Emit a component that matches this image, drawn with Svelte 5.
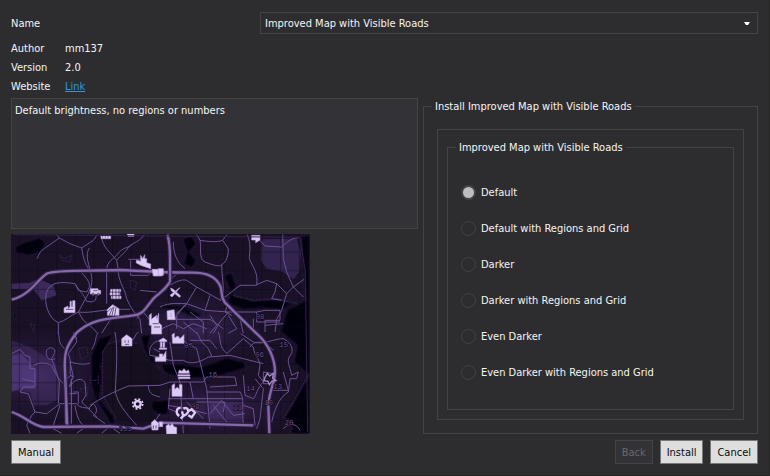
<script>
  const mods = ['Improved Map with Visible Roads'];
  const details = [
    { label: 'Author', value: 'mm137' },
    { label: 'Version', value: '2.0' },
    { label: 'Website', value: 'Link', href: '#website' }
  ];
  const options = [
    'Default',
    'Default with Regions and Grid',
    'Darker',
    'Darker with Regions and Grid',
    'Even Darker',
    'Even Darker with Regions and Grid'
  ];
  let mod = $state(mods[0]);
  let choice = $state(options[0]);

  const highways = [
    'M5 203C60 190 85 140 110 125C140 112 230 118 330 114C380 116 450 122 550 122C600 122 622 140 632 165C637 185 632 195 645 212L740 305C775 335 795 380 795 420C795 450 777 480 775 520L778 604',
    'M480 150C460 180 450 180 430 200C405 230 400 248 370 250C300 260 250 258 200 302C165 345 162 370 165 420L172 585',
    'M5 540C50 555 65 580 100 585L300 583L400 590L450 572L730 580',
    'M472 8C482 40 480 80 480 150'
  ];
  const roads = [
    'M82 80C88 60 95 55 110 45L148 18L180 35L215 48L250 25L262 8M148 18L140 8M215 48C220 80 225 95 238 114M238 48C225 70 235 90 240 114',
    'M272 8C280 50 300 60 320 85L325 114M320 85C330 70 350 60 355 45C370 30 390 30 402 8M290 114C290 90 310 80 320 70C340 40 360 50 365 38',
    'M240 114C250 140 245 165 235 185L205 240L220 265L250 290L262 304M205 240C180 250 170 265 145 272C115 260 100 210 110 180C120 150 150 148 195 155C210 180 220 185 230 208C250 212 260 208 258 190',
    'M145 272V304M215 122C240 150 245 160 230 180L205 175L195 155M290 118V215M324 118C330 160 345 170 350 200C360 225 375 245 390 262L395 304M310 250L290 280L275 304',
    'M205 240C250 245 270 230 360 232M390 175L440 180M362 85V130H415L425 120M355 82H390M380 260L400 240L440 290',
    'M570 25C575 50 565 80 585 90C610 100 630 105 635 98C650 90 655 70 655 50L638 25L650 8M570 25L560 8M570 25C590 28 620 32 638 25M635 98C635 125 640 150 640 180L632 205L690 160H735L770 145L800 155L830 185L850 165L880 195M850 165L882 142',
    'M712 8C725 40 718 60 718 80C730 110 745 120 740 160M740 15L765 42L815 45C830 30 850 15 865 18M818 8L820 80L830 120L850 165M830 185L815 235L800 262L795 300',
    'M460 175C490 150 515 140 530 145L560 165L605 190L632 205M560 165L530 215L500 245M600 190L585 235L530 215M450 225C480 210 510 215 530 215M490 30C490 65 500 90 525 110M480 145C500 120 520 118 550 118',
    'M585 235L655 240L740 240L765 235H810V265H765V300M740 240V270H810M655 240L630 270L610 304M655 225L690 260M530 215L500 250V290M500 262H600L640 290M540 240L580 270V304M520 270L560 304',
    'M800 155L795 180L785 200L815 205M655 212L645 240L665 250M765 280L820 275',
    'M145 300C150 330 145 330 163 350M195 302L200 330L175 365C190 400 170 430 190 435L180 390C200 395 220 400 240 393M245 352C260 330 255 310 265 302',
    'M135 380C115 390 105 370 110 355C120 340 140 350 133 365L125 380C135 410 140 420 148 450L145 515M70 400C90 390 110 392 125 400C135 425 145 440 160 455',
    'M5 365L30 352L45 370L60 375V410H75V465H40L30 480L55 485L75 540L65 550L50 580L60 604M35 440L75 450M75 540L110 545L150 515H200C210 530 225 525 240 530M172 440C180 425 195 430 185 445L178 465C195 440 215 435 225 452L228 490L215 510M190 480H205V515M178 485H200',
    'M315 300C325 350 318 420 316 480C325 515 340 535 380 580M240 520C270 500 310 480 355 462L450 460M235 530L250 515C265 530 260 545 250 550L285 575M215 510L260 555M150 520L130 580M195 520C200 550 205 570 225 585L200 604M120 585L155 604M300 583L275 604M300 583L330 604M415 460C415 490 435 490 450 495',
    'M368 325L378 308L385 300M450 325C425 330 415 350 420 370L448 375M430 350L450 360M450 545L420 590',
    'M450 378L480 385H520C545 400 570 390 595 375L660 370L720 385L760 395M560 300L575 330L595 350L605 372M625 300C635 330 625 340 650 365L700 320L730 345M540 325H600L620 350M500 315L560 350M480 330L490 400L510 450L520 604M560 350L590 470L600 590',
    'M450 460L480 450H580L590 435H675L680 460L600 465M590 480H690C705 500 695 530 700 575M475 500H700M560 510H645L640 540M475 520L530 530L590 545M600 545L635 505L670 550L705 545M610 520L650 570M530 510L580 560M480 470L475 530L500 540M540 450L550 500',
    'M692 305L730 330C760 340 790 320 820 320C840 330 850 345 845 365C825 385 840 400 845 430L865 420L860 440H840L835 480C810 495 800 520 790 550L785 570M730 345C735 380 745 370 750 400L745 430L760 450C740 470 740 490 730 500L705 490L700 430M720 345C735 320 770 330 790 355M760 420L790 425L795 455H760ZM820 420L835 475M780 475H835M735 440L760 470L750 560L740 590M700 520L730 530L735 580M820 590C840 570 860 575 870 595',
    'M455 290L490 275L520 290L550 275L590 290M600 250L620 280L600 304M655 250L680 290L655 304M690 260L700 304M730 260V304'
  ];
  const shadows = [
    'M10 45L40 30L90 15L108 35L95 60L60 72L20 65Z',
    'M515 20L545 10L560 35L540 60L560 85L545 110L520 95L530 60Z',
    'M640 130L665 120L680 160L670 190L730 205L800 200L860 215L815 235L760 230L700 235L650 215L660 180Z',
    'M872 12L900 6V606H840L850 570L820 560L850 510L895 430L850 390L860 340L810 300L830 230L885 205Z',
    'M265 318L315 302L290 345L275 400L278 440L270 500L310 550L320 580L300 575L255 500L240 450L242 370Z',
    'M390 310L425 305L415 345L440 390L450 410L420 390L400 350Z',
    'M450 393L520 395L570 405L650 375L705 390L710 410L640 430L590 440L500 438L460 420Z',
    'M450 505L480 500L475 550L445 550L420 530L425 505Z',
    'M450 215L510 220L580 245L560 260L500 235L450 230ZM10 240L22 250L15 263L5 255Z'
  ];
  const labels = [
    [522, 347, '07'], [595, 435, '16'], [542, 531, '09'], [670, 534, '11'],
    [790, 470, '13'], [762, 520, '10'], [708, 478, '14'], [735, 374, '06'],
    [808, 346, '15'], [824, 580, '20'], [327, 598, '1J5'], [737, 260, '08']
  ];
</script>

<main>
  <div class="name">
    <label for="mod">Name</label>
    <div class="combo">
      <select id="mod" bind:value={mod}>
        {#each mods as m}<option>{m}</option>{/each}
      </select>
      <svg viewBox="0 0 6 3" aria-hidden="true"><path d="M0 0h6L4 3H2z" fill="#fff" /></svg>
    </div>
  </div>

  <dl>
    {#each details as d}
      <div>
        <dt>{d.label}</dt>
        <dd>{#if d.href}<a href={d.href}>{d.value}</a>{:else}{d.value}{/if}</dd>
      </div>
    {/each}
  </dl>

  <div class="content">
    <div class="left">
      <textarea readonly aria-label="Description" value="Default brightness, no regions or numbers"></textarea>
      <svg class="map" viewBox="3 6 897 600" role="img" aria-label="Map preview">
        <defs>
          <pattern id="grid" width="56" height="56" patternUnits="userSpaceOnUse">
            <path d="M28 0V56M0 4H56" stroke="#08040f" stroke-width="2" opacity=".6" />
          </pattern>
          <radialGradient id="glow">
            <stop offset="0" stop-color="#4a3370" stop-opacity=".6" />
            <stop offset="1" stop-color="#302048" stop-opacity="0" />
          </radialGradient>
          <filter id="soft"><feGaussianBlur stdDeviation="4" /></filter>
        </defs>
        <rect x="3" y="6" width="897" height="600" fill="#1a1127" />
        <ellipse cx="80" cy="430" rx="200" ry="140" fill="url(#glow)" />
        <ellipse cx="620" cy="530" rx="240" ry="100" fill="url(#glow)" />
        <ellipse cx="560" cy="290" rx="220" ry="110" fill="url(#glow)" />
        <g fill="#040208" stroke="#2c1d40" stroke-width="3" filter="url(#soft)">
          {#each shadows as d}<path {d} />{/each}
        </g>
        <path d="M278 360C300 310 350 330 385 335L425 400L450 420V500L420 510L440 560L380 575L320 560L278 490Z" fill="#160f20" />
        <g fill="#5c4390">
          <path d="M5 155L60 152L85 140L130 160L140 190L95 205L70 172H5Z" opacity=".5" />
          <path d="M755 22L860 20L873 60L868 120L850 142L820 120L770 110L752 85Z" opacity=".38" />
          <path d="M5 325L60 345L140 395L148 500L110 520H70L60 480L5 475Z" opacity=".3" />
          <path d="M5 370L35 365L75 410V470H30L5 480Z" opacity=".5" />
          <path d="M600 510H700V570H600Z" opacity=".3" />
        </g>
        <rect x="3" y="6" width="897" height="600" fill="url(#grid)" />
        <g fill="none" stroke="#33234a" stroke-width="3" stroke-dasharray="7 3">
          <path d="M150 70L165 80L185 70L180 90L155 85ZM360 145L380 150L375 175L362 170ZM60 275L75 280L70 298ZM205 350L230 345L235 370L215 385ZM210 470L235 465L230 495ZM242 430V460M265 430V460M242 445H265" />
          <path d="M278 360C300 310 350 330 385 335M278 360V490L320 560M850 510L895 430M820 560L850 510M670 190L730 205L800 200L860 215" />
        </g>
        <g fill="none" stroke="#6c5292" stroke-width="3" stroke-linejoin="round">
          {#each roads as d}<path {d} />{/each}
        </g>
        <g fill="none" stroke-linejoin="round">
          {#each highways as d}
            <path {d} stroke="#33224a" stroke-width="13" />
            <path {d} stroke="#8469a9" stroke-width="7" />
          {/each}
          <path d="M184 440V575M166 440V575M190 302L200 320" stroke="#765a9f" stroke-width="3" />
        </g>
        <g class="district">
          {#each labels as [x, y, t]}<text {x} {y}>{t}</text>{/each}
        </g>
        <g fill="#dccbf5" stroke="#b59cd8" stroke-width="2">
          <path d="M162 242V228L174 222V230L180 224V208H184V224H188V206H195V242Z" />
          <path d="M241 170H264V175H272V186H267V189H262V186H252V189H247V186H241Z" />
          <path d="M302 172H332V179H302ZM300 182H330V189H300ZM304 192H333V200H304Z" />
          <path d="M292 232L308 218L327 230V250H292Z" />
          <path d="M380 84L392 88V70L398 80L404 68V80H410V92L422 96V110L404 104L392 100L378 92Z" />
          <path d="M426 112H456V132H430ZM418 250L424 244V262L440 250V262L446 244V272L455 280V306H424V280H418Z" />
          <path d="M273 10H302V20H273ZM352 6H372V13H354ZM725 10H750V24L737 32V24H725Z" />
          <path d="M482 168L490 172L512 192L508 196L484 176ZM510 167L486 195L480 190L505 170Z" />
          <path d="M471 237L492 233L496 263H472ZM445 110H460V130H445Z" />
          <path d="M350 308L366 320V342H335V320Z" />
          <path d="M448 325L460 318L470 325V329H448ZM451 331H456V346H451ZM459 331H464V346H459ZM448 348H470V352H448Z" />
          <path d="M486 308L493 304V318L504 312L510 320L522 308V334H488ZM448 366H458V375L468 358V388H436V376H448Z" />
          <path d="M486 460L494 455V472L502 466L508 472V458H516V493H486Z" />
          <path d="M505 424L508 414L516 418L522 410L528 418L536 414L538 424ZM504 428H540V432H504ZM506 435H540V440H506Z" />
          <path d="M424 572L434 563L446 574L444 594H426ZM448 570H458V584H448ZM468 582L476 576L480 582L486 574L492 584L500 586V606H470Z" />
        </g>
        <g fill="none" stroke="#dccbf5" stroke-width="7">
          <circle cx="383" cy="516" r="9" />
          <circle cx="383" cy="516" r="15" stroke-width="5" stroke-dasharray="6 5.8" />
          <path d="M512 527C498 528 496 545 508 552M520 530C532 524 540 536 530 546L520 552L516 538M535 538L545 532L555 542L545 556L535 550M512 560L524 548" />
        </g>
        <g fill="none" stroke="#2a1b3c" stroke-width="2">
          <path d="M298 250L308 226M306 250L312 224M314 250L318 226M292 240L304 228M345 325V332M355 325V332M345 337H357M308 172V200M318 172V200M327 172V200M250 176H262M168 232H190M482 245H484M482 252H484M278 13V17M286 13V17M294 13V17M430 580V590M438 580V590M428 275H446M432 285H450" />
          <circle cx="249" cy="186" r="3" /><circle cx="265" cy="186" r="3" />
        </g>
        <path d="M10 8L870 16L886 120L893 600" fill="none" stroke="#33234a" stroke-width="3" />
        <path d="M765 436L772 424L779 432L790 424L788 438L798 446L785 448L778 458L774 448L762 446Z" fill="none" stroke="#a58ac8" stroke-width="4" />
      </svg>
    </div>

    <fieldset class="outer">
      <legend>Install Improved Map with Visible Roads</legend>
      <div class="page">
        <fieldset class="group">
          <legend>Improved Map with Visible Roads</legend>
          {#each options as o}
            <label class="option">
              <input type="radio" name="variant" value={o} bind:group={choice} />
              {o}
            </label>
          {/each}
        </fieldset>
      </div>
    </fieldset>
  </div>

  <footer>
    <button class="manual" type="button">Manual</button>
    <button type="button" disabled>Back</button>
    <button type="button">Install</button>
    <button type="button">Cancel</button>
  </footer>
</main>

<style>
  :global(body) {
    background: #2d2d2f;
  }
  main {
    box-sizing: border-box;
    min-height: 100vh;
    padding: 12px 11px 10px;
    border-right: 1px solid #252526;
    border-bottom: 1px solid #252526;
    background: #2d2d2f;
    color: #f5f5f5;
    font: 11px/17px Tahoma, 'DejaVu Sans Condensed', sans-serif;
  }
  select, textarea, button, input {
    box-sizing: border-box;
    margin: 0;
    font: inherit;
    color: inherit;
    border-radius: 0;
  }
  .name {
    display: grid;
    grid-template-columns: 1fr 2fr;
    align-items: center;
  }
  .combo {
    position: relative;
  }
  select {
    display: block;
    width: 100%;
    height: 22px;
    padding: 0 20px 0 4px;
    border: 1px solid #434346;
    background: #2d2d2f;
    appearance: none;
  }
  .combo svg {
    position: absolute;
    right: 8px;
    top: 10px;
    width: 6px;
    height: 3px;
  }
  dl {
    margin: 5px 0 2px;
    line-height: 19px;
  }
  dl div {
    display: flex;
  }
  dt {
    width: 54px;
  }
  dd {
    margin: 0;
  }
  a {
    color: #2f96de;
  }
  .content {
    display: grid;
    grid-template-columns: 407fr 335fr;
    gap: 5px;
  }
  .left {
    display: flex;
    flex-direction: column;
    gap: 5px;
    min-width: 0;
  }
  textarea {
    display: block;
    flex: 1;
    width: 100%;
    padding: 3px;
    border: 1px solid #434346;
    background: #333337;
    resize: none;
    outline: 0;
  }
  .map {
    display: block;
    width: 299px;
    height: 200px;
  }
  .district {
    fill: #6b5190;
    stroke: #08040f;
    stroke-width: 3px;
    paint-order: stroke;
    font: 22px 'Liberation Mono', monospace;
  }
  fieldset {
    min-width: 0;
    margin: 0;
    border: 1px solid #434346;
  }
  legend {
    padding: 0 3px;
  }
  .outer {
    padding: 14px 8px 13px;
  }
  .page {
    margin: 0 5px;
    padding: 9px;
    border: 1px solid #434346;
  }
  .group {
    padding: 18px 8px 19px;
  }
  .option {
    display: flex;
    align-items: center;
    gap: 5px;
    height: 36px;
    margin-left: 5px;
  }
  input {
    width: 15px;
    height: 15px;
    border: 1px solid #434346;
    border-radius: 50%;
    appearance: none;
  }
  input:checked {
    border: 2px solid #434348;
    background: #bebebe;
  }
  footer {
    display: flex;
    gap: 7px;
    margin-top: 6px;
  }
  button {
    height: 24px;
    padding: 0 6px;
    border: 1px solid #777;
    background: #dedede;
    color: #0a0a0a;
  }
  button:disabled {
    border-color: #434346;
    background: #333337;
    color: #686868;
  }
  .manual {
    margin-right: auto;
  }
</style>
